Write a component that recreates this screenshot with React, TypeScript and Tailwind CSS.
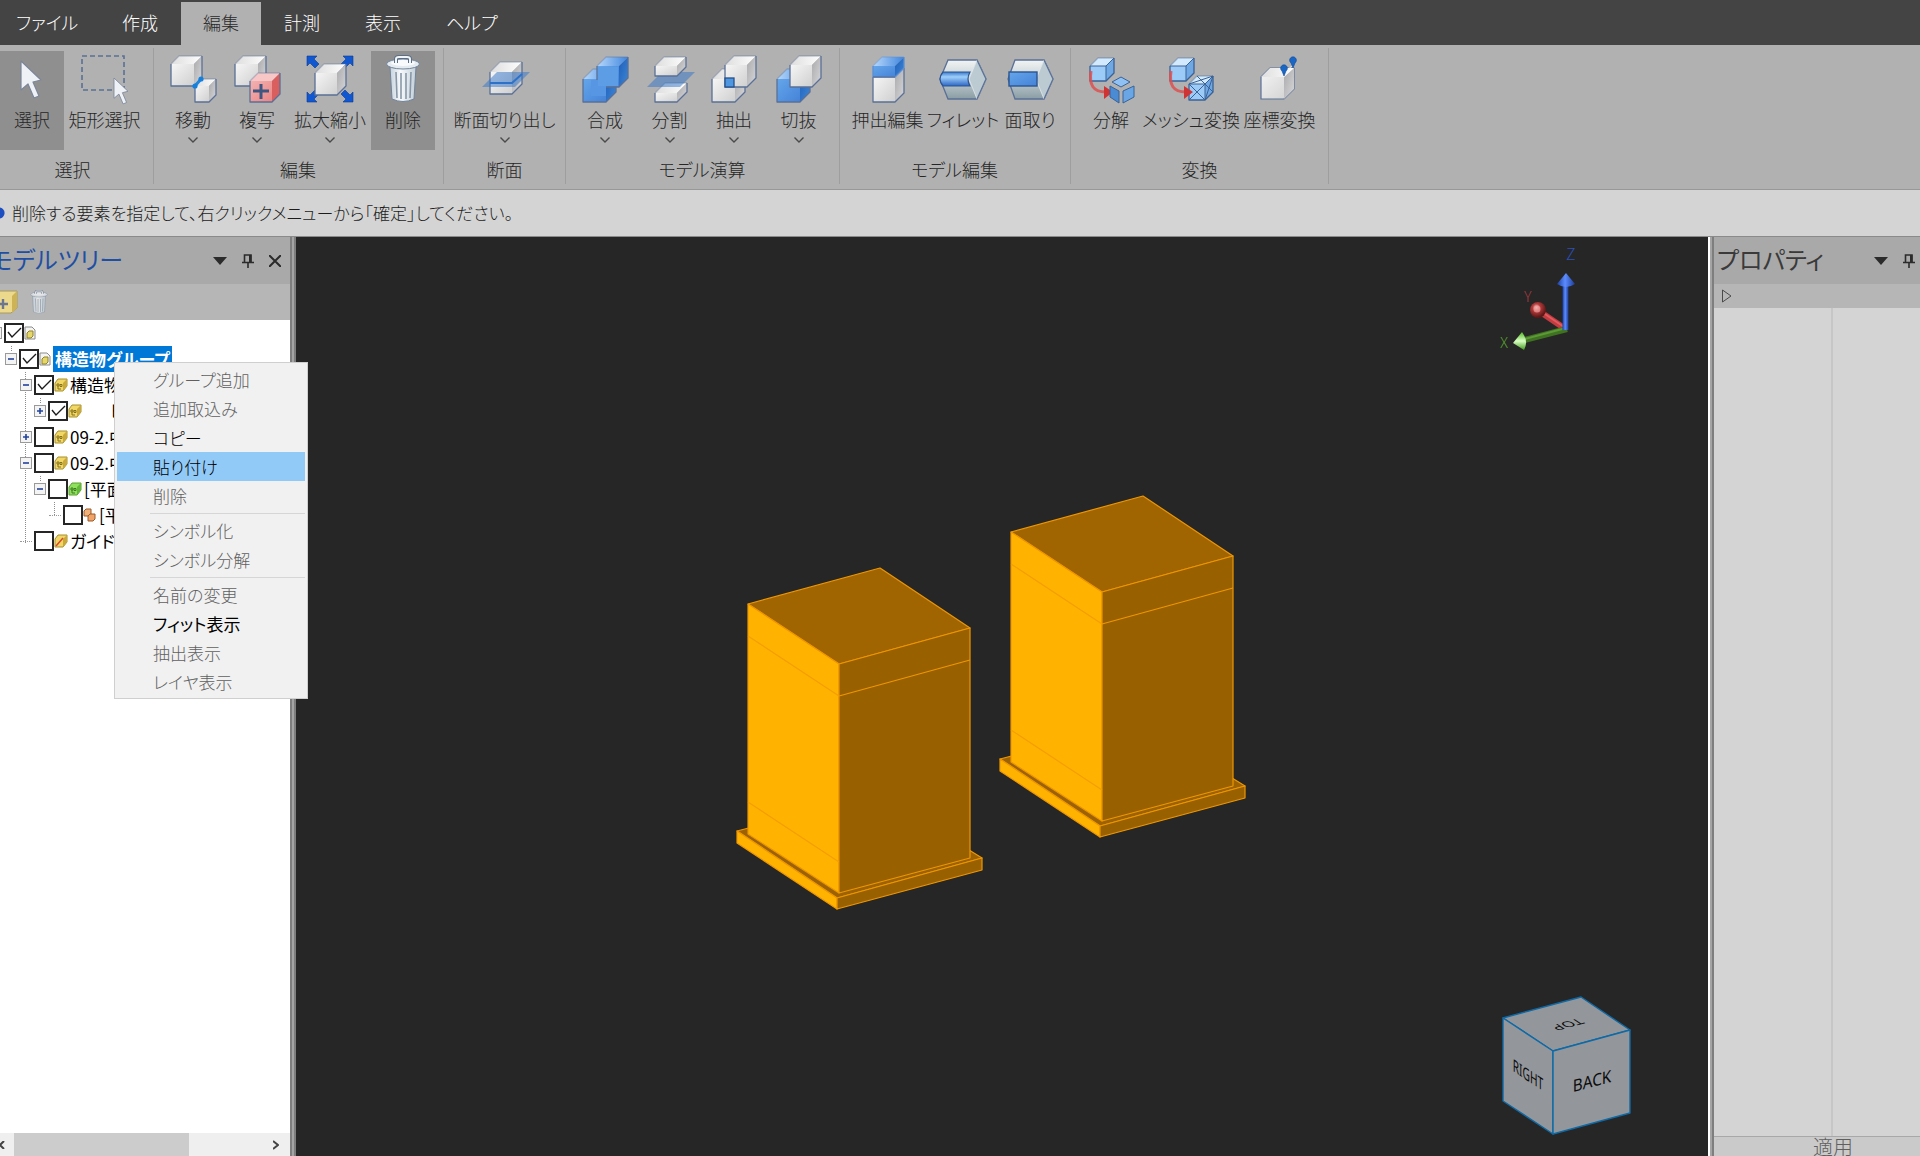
import type { ReactNode } from "react";
import clsx from "clsx";

/* ---------- shared drawing pieces ---------- */

const LINE = "#5a7096";

function Gradients() {
  return (
    <svg className="absolute h-0 w-0" aria-hidden="true">
      <defs>
        <linearGradient id="white" x1="0" y1="0" x2="1" y2="1">
          <stop offset="0" stopColor="#f6f6f6" />
          <stop offset="1" stopColor="#cfcfcf" />
        </linearGradient>
        <linearGradient id="whiteSide" x1="0" y1="0" x2="1" y2="1">
          <stop offset="0" stopColor="#a9a9ac" />
          <stop offset="1" stopColor="#d8d8da" />
        </linearGradient>
        <linearGradient id="whiteTop" x1="0" y1="0" x2="1" y2="0">
          <stop offset="0" stopColor="#dedede" />
          <stop offset="1" stopColor="#fdfdfd" />
        </linearGradient>
        <linearGradient id="blue" x1="0" y1="0" x2="1" y2="1">
          <stop offset="0" stopColor="#64a6ea" />
          <stop offset="1" stopColor="#4582d8" />
        </linearGradient>
        <linearGradient id="blueSide" x1="0" y1="0" x2="1" y2="1">
          <stop offset="0" stopColor="#1f5fb8" />
          <stop offset="1" stopColor="#3d86d6" />
        </linearGradient>
        <linearGradient id="blueTop" x1="0" y1="0" x2="1" y2="0">
          <stop offset="0" stopColor="#b8d8fa" />
          <stop offset="1" stopColor="#3f86df" />
        </linearGradient>
        <linearGradient id="red" x1="0" y1="0" x2="1" y2="1">
          <stop offset="0" stopColor="#f3b2b2" />
          <stop offset="1" stopColor="#ec8484" />
        </linearGradient>
        <linearGradient id="steel" x1="0" y1="0" x2="0" y2="1">
          <stop offset="0" stopColor="#f2f4f4" />
          <stop offset="0.45" stopColor="#c8d2d6" />
          <stop offset="1" stopColor="#8a9da4" />
        </linearGradient>
        <linearGradient id="can" x1="0" y1="0" x2="1" y2="0">
          <stop offset="0" stopColor="#c6d2dc" />
          <stop offset="0.4" stopColor="#f7fafc" />
          <stop offset="1" stopColor="#c2ced8" />
        </linearGradient>
        <linearGradient id="roll" x1="0" y1="0" x2="0" y2="1">
          <stop offset="0" stopColor="#3a78cc" />
          <stop offset="0.35" stopColor="#9fd0fb" />
          <stop offset="1" stopColor="#2c66c4" />
        </linearGradient>
        <linearGradient id="zAxis" x1="0" y1="0" x2="1" y2="0">
          <stop offset="0" stopColor="#1c3f9e" />
          <stop offset="0.45" stopColor="#5c8cff" />
          <stop offset="1" stopColor="#1b3c96" />
        </linearGradient>
        <linearGradient id="xAxis" x1="0" y1="0" x2="0" y2="1">
          <stop offset="0" stopColor="#4fb81f" />
          <stop offset="0.5" stopColor="#d9ffc4" />
          <stop offset="1" stopColor="#3f9a18" />
        </linearGradient>
        <radialGradient id="yAxis" cx="0.4" cy="0.35" r="0.6">
          <stop offset="0" stopColor="#ffd0d0" />
          <stop offset="0.4" stopColor="#b63c3c" />
          <stop offset="1" stopColor="#5e1717" />
        </radialGradient>
      </defs>
    </svg>
  );
}

type CubeProps = {
  x: number;
  y: number;
  w: number;
  h: number;
  d: number;
  front?: string;
  top?: string;
  side?: string;
  line?: string;
};

/** Box with its front face at (x, y) and a depth of d towards the upper right. */
function Cube({
  x, y, w, h, d,
  front = "url(#white)", top = "url(#whiteTop)", side = "url(#whiteSide)", line = LINE,
}: CubeProps) {
  return (
    <g strokeLinejoin="round" strokeWidth="1.3">
      <rect x={x} y={y} width={w} height={h} fill={front} />
      <path d={`M${x} ${y}l${d} ${-d}h${w}l${-d} ${d}z`} fill={top} />
      <path d={`M${x + w} ${y}l${d} ${-d}v${h}l${-d} ${d}z`} fill={side} />
      <path d={`M${x} ${y}l${d} ${-d}h${w}`} fill="none" stroke={line} opacity="0.35" />
      <path d={`M${x + w + d} ${y - d}v${h}l${-d} ${d}h${-w}v${-h}`} fill="none" stroke={line} />
    </g>
  );
}

const blueFaces = { front: "url(#blue)", top: "url(#blueTop)", side: "url(#blueSide)" };
const paleFaces = { front: "#9ccbf8", top: "#d3e9fd", side: "#6fa8e2", line: "#3a6296" };

function Pointer({ x, y, s }: { x: number; y: number; s: number }) {
  return (
    <path
      transform={`translate(${x} ${y}) scale(${s})`}
      d="M0 0V29L7 23L13 37L18 35L12 21L20 19Z"
      fill="#eef1f6" stroke="#7c8698" strokeWidth="1.2" strokeLinejoin="round"
    />
  );
}

function Can() {
  return (
    <>
      <path d="M11 12L13 44Q24 49 35 44L37 12Z" fill="url(#can)" stroke="#71839a" />
      <path d="M17 17L18 43M22 18V44M27 18V44M32 17L31 43" stroke="#8797a8" strokeWidth="1.6" fill="none" />
      <ellipse cx="24" cy="9" rx="16.5" ry="5" fill="#e3eaf0" stroke="#71839a" />
      <ellipse cx="24" cy="8" rx="12" ry="3" fill="#f8fafc" />
      <path d="M17 8V4Q17 2 20 2H28Q31 2 31 4V8" fill="none" stroke="#5c6f86" strokeWidth="4" />
      <path d="M17 8V4Q17 2 20 2H28Q31 2 31 4V8" fill="none" stroke="#f2f5f8" strokeWidth="2" />
    </>
  );
}

function Plane() {
  return <path d="M1 32H34L49 17H16Z" fill="#2f74c8" opacity="0.5" />;
}

function CornerArrow({ r }: { r: number }) {
  return (
    <path
      transform={`rotate(${r} 24 24)`}
      d="M1 1H11L8 4L13 9L9 13L4 8L1 11Z"
      fill="#1158d0" stroke="#0a3a94" strokeWidth="0.6"
    />
  );
}

function RedArrow() {
  return (
    <>
      <path d="M4 16C2 30 6 37 19 37" fill="none" stroke="#dd5050" strokeWidth="3" opacity="0.85" />
      <path d="M17 31L26 37L17 44Z" fill="#cf3434" />
    </>
  );
}

function Hexagon({ left }: { left: number }) {
  return (
    <>
      <path d={`M${left} 24L9 5H38L47 24L38 44H9Z`} fill="url(#steel)" stroke={LINE} strokeWidth="1.3" />
      <path d="M30 24L38 5L47 24L38 44Z" fill="#bccbd2" stroke="#e2e9ec" strokeWidth="0.8" />
      <path d="M38 5L47 24L38 44" fill="none" stroke={LINE} strokeWidth="1.3" />
    </>
  );
}

function Pin({ x, y }: { x: number; y: number }) {
  return (
    <path
      transform={`translate(${x} ${y})`}
      d="M0 8L-2 3A3.4 3.4 0 1 1 2 3Z"
      fill="#1a66c4" stroke="#0d4a9c" strokeWidth="0.6"
    />
  );
}

const icons: Record<string, ReactNode> = {
  select: <Pointer x={13} y={6} s={1} />,
  rectSelect: (
    <>
      <rect x="1" y="1" width="42" height="34" fill="none" stroke={LINE} strokeWidth="1.6" strokeDasharray="5 3" />
      <Pointer x={33} y={23} s={0.7} />
    </>
  ),
  move: (
    <>
      <Cube x={2} y={9} w={23} h={22} d={8} />
      <Cube x={26} y={31} w={14} h={16} d={7} />
      <path d="M26 31L32 24" stroke="#1f86dc" strokeWidth="3" />
      <circle cx="26" cy="31" r="2.6" fill="#1580dc" />
      <circle cx="32" cy="24" r="2.6" fill="#1580dc" />
    </>
  ),
  copy: (
    <>
      <Cube x={2} y={9} w={23} h={22} d={8} />
      <Cube x={17} y={26} w={22} h={21} d={8} front="url(#red)" top="#f7c6c6" side="#d95f5f" />
      <path d="M28 29V44M20 36H36" stroke="#3f5680" strokeWidth="3" />
    </>
  ),
  scale: (
    <>
      <CornerArrow r={0} />
      <CornerArrow r={90} />
      <CornerArrow r={180} />
      <CornerArrow r={270} />
      <Cube x={9} y={18} w={22} h={22} d={9} />
    </>
  ),
  trash: <Can />,
  section: (
    <>
      <Cube x={9} y={17} w={22} h={22} d={10} />
      <Plane />
      <path d="M9 28H31L41 19" fill="none" stroke="#2d72c8" strokeWidth="2" />
    </>
  ),
  union: (
    <>
      <Cube x={2} y={24} w={23} h={23} d={10} {...blueFaces} />
      <Cube x={16} y={11} w={22} h={21} d={9} {...blueFaces} />
      <rect x="10" y="25" width="15" height="16" fill="#5796e3" />
      <path d="M17 12H37V31H17Z" fill="#5c9de6" />
    </>
  ),
  split: (
    <>
      <Cube x={9} y={38} w={22} h={9} d={10} />
      <Plane />
      <Cube x={9} y={11} w={22} h={10} d={9} />
    </>
  ),
  intersect: (
    <>
      <Cube x={2} y={24} w={23} h={23} d={10} />
      <Cube x={15} y={10} w={22} h={22} d={9} />
      <rect x="15" y="23" width="9" height="9" fill="#4f97e0" stroke="#27508c" strokeWidth="1.3" />
    </>
  ),
  subtract: (
    <>
      <Cube x={2} y={24} w={23} h={23} d={10} {...blueFaces} />
      <Cube x={15} y={10} w={22} h={22} d={9} />
    </>
  ),
  extrude: (
    <>
      <Cube x={9} y={22} w={22} h={25} d={9} />
      <Cube x={9} y={11} w={22} h={11} d={9} {...blueFaces} line="#5b8fd4" />
      <path d="M9 22H31" stroke={LINE} strokeWidth="1.3" />
    </>
  ),
  fillet: (
    <>
      <Hexagon left={1} />
      <path d="M4 17H31Q27 24 31 31H4Q-2 24 4 17Z" fill="url(#roll)" stroke="#2d5590" strokeWidth="1.2" />
    </>
  ),
  chamfer: (
    <>
      <Hexagon left={2} />
      <rect x="3" y="17" width="28" height="14" fill="url(#blue)" stroke="#2d5590" strokeWidth="1.4" />
    </>
  ),
  explode: (
    <>
      <Cube x={3} y={11} w={16} h={15} d={8} {...paleFaces} />
      <path d="M3 11H19V26M19 11L27 3" fill="none" stroke="#3a6296" />
      <RedArrow />
      <path d="M25 27L34 22L43 27L34 32Z" fill="#8fc1f4" stroke="#3a6296" />
      <path d="M23 31L32 36V48L23 42Z" fill="#4b8bd4" stroke="#3a6296" />
      <path d="M36 36L47 31V42L36 48Z" fill="#6aa6e6" stroke="#3a6296" />
    </>
  ),
  mesh: (
    <>
      <Cube x={3} y={11} w={16} h={15} d={8} {...paleFaces} />
      <path d="M3 11H19V26M19 11L27 3" fill="none" stroke="#3a6296" />
      <Cube x={22} y={29} w={16} h={16} d={8} {...paleFaces} />
      <path d="M22 29H38V45M38 29L46 21M22 29L38 45M22 45L38 29M30 21L38 29L46 37M22 29L46 21M38 45L46 21" fill="none" stroke="#3a6296" />
      <RedArrow />
    </>
  ),
  coords: (
    <>
      <path d="M5 22L14 13H28L38 13V34L28 44H5Z" fill="url(#white)" stroke={LINE} strokeWidth="1.2" />
      <path d="M28 22L38 13V34L28 44Z" fill="url(#whiteSide)" />
      <path d="M5 22L14 13H38L28 22Z" fill="url(#whiteTop)" />
      <path d="M28 18L38 9" stroke="#f2f2f2" />
      <Pin x={28} y={13} />
      <Pin x={37} y={5} />
    </>
  ),
};

/* ---------- top bars ---------- */

const tabs = ["作成", "編集", "計測", "表示", "ヘルプ"];

function MenuBar() {
  return (
    <nav className="flex h-[45px] shrink-0 gap-px bg-[#444444] pt-0.5 text-lg leading-6 text-white">
      <button className="w-[99px] pb-1 pl-4 text-left">ファイル</button>
      {tabs.map((t) => (
        <button
          key={t}
          className={clsx("h-[43px] px-[22px] pb-1", t === "編集" ? "bg-[#b1b1b1] text-[#2a2a2a]" : "text-white")}
        >
          {t}
        </button>
      ))}
    </nav>
  );
}

type Tool = { icon: string; label: string; width: string; more?: boolean; on?: boolean };
const N = "w-16";
const M = "w-[81px]";

const groups: { title: string; pad: string; tools: Tool[] }[] = [
  {
    title: "選択", pad: "pr-2",
    tools: [
      { icon: "select", label: "選択", width: N, on: true },
      { icon: "rectSelect", label: "矩形選択", width: M },
    ],
  },
  {
    title: "編集", pad: "pl-[7px] pr-2",
    tools: [
      { icon: "move", label: "移動", width: N, more: true },
      { icon: "copy", label: "複写", width: N, more: true },
      { icon: "scale", label: "拡大縮小", width: "w-[82px]", more: true },
      { icon: "trash", label: "削除", width: N, on: true },
    ],
  },
  {
    title: "断面", pad: "px-2",
    tools: [{ icon: "section", label: "断面切り出し", width: "w-[105px]", more: true }],
  },
  {
    title: "モデル演算", pad: "pl-[7px] pr-2",
    tools: [
      { icon: "union", label: "合成", width: N, more: true },
      { icon: "split", label: "分割", width: "w-[65px]", more: true },
      { icon: "intersect", label: "抽出", width: N, more: true },
      { icon: "subtract", label: "切抜", width: "w-[65px]", more: true },
    ],
  },
  {
    title: "モデル編集", pad: "pl-[7px] pr-2",
    tools: [
      { icon: "extrude", label: "押出編集", width: M },
      { icon: "fillet", label: "フィレット", width: "w-[70px]" },
      { icon: "chamfer", label: "面取り", width: N },
    ],
  },
  {
    title: "変換", pad: "px-2",
    tools: [
      { icon: "explode", label: "分解", width: N },
      { icon: "mesh", label: "メッシュ変換", width: "w-24" },
      { icon: "coords", label: "座標変換", width: M },
    ],
  },
];

function Ribbon() {
  return (
    <div className="flex h-[145px] shrink-0 border-b border-[#989898] bg-[#b1b1b1] pt-[3px] text-lg leading-6 text-[#262626]">
      {groups.map((g) => (
        <section key={g.title} className={clsx("flex h-[136px] flex-col border-r border-[#9e9e9e] pt-[3px]", g.pad)}>
          <div className="flex">
            {g.tools.map((t) => (
              <button
                key={t.label}
                className={clsx("flex h-[99px] flex-col items-center pt-1 whitespace-nowrap", t.width, t.on && "bg-[#8f8f8f]")}
              >
                <svg viewBox="0 0 48 48" className="size-12 shrink-0 overflow-visible">{icons[t.icon]}</svg>
                <span className="mt-1">{t.label}</span>
                {t.more && (
                  <svg viewBox="0 0 10 6" className="mt-1.5 h-1.5 w-2.5" fill="none" stroke="#4a4a4a" strokeWidth="1.4">
                    <path d="M0.5 0.5L5 5L9.500 0.5" />
                  </svg>
                )}
              </button>
            ))}
          </div>
          <h2 className="mt-[7px] text-center">{g.title}</h2>
        </section>
      ))}
    </div>
  );
}

function StatusBar() {
  return (
    <div className="flex h-[47px] shrink-0 items-center border-b border-[#8a8a8a] bg-[#d4d4d4] text-[17px] text-[#1c1c1c]">
      <svg viewBox="0 0 5 12" className="h-3 w-[5px]"><circle cx="-1" cy="6" r="5.6" fill="#1d4fc0" /></svg>
      <p className="pl-[7px]">削除する要素を指定して、右クリックメニューから「確定」してください。</p>
    </div>
  );
}

/* ---------- dock panel header ---------- */

function Triangle() {
  return (
    <button aria-label="メニュー">
      <svg viewBox="0 0 14 8" className="h-2 w-3.5"><path d="M0 0H14L7 8Z" fill="#2b2b2b" /></svg>
    </button>
  );
}

function PinButton() {
  return (
    <button aria-label="固定">
      <svg viewBox="0 0 12 14" className="h-3.5 w-3" fill="none" stroke="#2b2b2b" strokeWidth="1.6">
        <path d="M2.5 8V1H9V8M0 8.500H12M6 9V14" />
        <path d="M8.200 1V8" strokeWidth="2.4" />
      </svg>
    </button>
  );
}

/* ---------- model tree ---------- */

function TreeIcon({ kind }: { kind: string }) {
  if (kind === "page")
    return (
      <svg viewBox="0 0 14 14" className="size-3.5 shrink-0">
        <path d="M1 1H8L11 4V13H1Z" fill="#f4f4f4" stroke="#8b8b8b" />
        <path d="M3 7L5 5H9V10L7 12H3Z" fill="#e6d76a" stroke="#8f8126" />
      </svg>
    );
  if (kind === "pair")
    return (
      <svg viewBox="0 0 14 14" className="size-3.5 shrink-0" stroke="#9a5a2a">
        <path d="M1 3L3 1H8V6L6 8H1Z" fill="#f0b07a" />
        <path d="M5 8L7 6H12V11L10 13H5Z" fill="#f0a468" />
      </svg>
    );
  const green = kind === "green";
  return (
    <svg viewBox="0 0 14 14" className="size-3.5 shrink-0">
      <path d="M1 5L4 1H13V8L9 13H1Z" fill={green ? "#8fe05c" : "#f0d766"} stroke={green ? "#5aa02f" : "#a88f2c"} />
      <path d="M9 5L13 1V8L9 13Z" fill={green ? "#62b838" : "#c9a93a"} />
      {kind === "guide" ? (
        <path d="M2 12L9 4" stroke="#d8482e" strokeWidth="1.5" />
      ) : (
        <path d="M3 6H5V8H3ZM4 8V11H7M6 6.500H8V8.500H6Z" fill="none" stroke={green ? "#3d7a20" : "#85701c"} />
      )}
    </svg>
  );
}

type Row = { indent: string; exp?: "+" | "-"; checked: boolean; icon: string; label: string; bold?: boolean; gap?: string };

const rows: Row[] = [
  { indent: "w-0", exp: "-", checked: true, icon: "page", label: "" },
  { indent: "w-[15px]", exp: "-", checked: true, icon: "page", label: "構造物グループ", bold: true },
  { indent: "w-[30px]", exp: "-", checked: true, icon: "box", label: "構造物" },
  { indent: "w-11", exp: "+", checked: true, icon: "box", label: "ヒ", gap: "ml-[26px]" },
  { indent: "w-[30px]", exp: "+", checked: false, icon: "box", label: "09-2.中" },
  { indent: "w-[30px]", exp: "-", checked: false, icon: "box", label: "09-2.中" },
  { indent: "w-11", exp: "-", checked: false, icon: "green", label: "[平面]" },
  { indent: "w-[59px]", checked: false, icon: "pair", label: "[平面]" },
  { indent: "w-[30px]", checked: false, icon: "guide", label: "ガイド" },
];

function TreeRow({ row, n }: { row: Row; n: number }) {
  return (
    <li className="flex h-[26px] items-center whitespace-nowrap text-black">
      <span className={clsx("shrink-0", row.indent)} />
      {row.exp ? (
        <button aria-label="展開" className="grid size-3 shrink-0 place-items-center border border-[#9a9a9a] bg-[#f4f4f4]">
          <svg viewBox="0 0 8 8" className="size-2" stroke="#22429c" strokeWidth="1.6">
            <path d={row.exp === "+" ? "M1 4H7M4 1V7" : "M1 4H7"} />
          </svg>
        </button>
      ) : (
        <span className="w-3 shrink-0 border-b border-dotted border-[#9a9a9a]" />
      )}
      <label className="ml-0.5 flex items-center">
        <span className="relative size-5 shrink-0">
          <input
            type="checkbox"
            defaultChecked={row.checked}
            aria-label={row.label || `項目${n}`}
            className="peer block size-5 appearance-none border-2 border-[#262626] bg-white"
          />
          <svg viewBox="0 0 20 20" className="pointer-events-none absolute inset-0 hidden size-5 peer-checked:block" fill="none" stroke="#1c1c1c" strokeWidth="1.4">
            <path d="M4 9L8 14L17 5" />
          </svg>
        </span>
        <TreeIcon kind={row.icon} />
        {row.label && (
          <span className={clsx("px-0.5 leading-[26px]", row.bold && "bg-[#0078d7] font-bold text-white", row.gap)}>
            {row.label}
          </span>
        )}
      </label>
    </li>
  );
}

function TreePanel() {
  return (
    <aside className="flex w-[290px] shrink-0 flex-col bg-[#b4b4b4]">
      <header className="flex h-[47px] shrink-0 items-center bg-[#a9a9a9] pr-[9px]">
        <h2 className="-ml-2.5 flex-1 pb-1 text-2xl whitespace-nowrap text-[#1f4fa3] font-normal">モデルツリー</h2>
        <div className="flex items-center gap-[15px]">
          <Triangle />
          <PinButton />
          <button aria-label="閉じる">
            <svg viewBox="0 0 12 12" className="size-3" stroke="#2b2b2b" strokeWidth="2"><path d="M0 0L12 12M12 0L0 12" /></svg>
          </button>
        </div>
      </header>
      <div className="flex h-9 shrink-0 items-center gap-3 bg-[#b6b6b6]">
        <button aria-label="追加">
          <svg viewBox="0 0 18 24" className="h-6 w-[18px]">
            <path d="M-4 5L0 1H17V18L11 23H-4Z" fill="#ecd98c" stroke="#a89a5c" />
            <path d="M12 6L17 1V18L12 23Z" fill="#cdb355" />
            <path d="M3 9V19M-2 14H8" stroke="#6b7690" strokeWidth="2.4" />
          </svg>
        </button>
        <button aria-label="削除" className="opacity-70">
          <svg viewBox="6 0 36 48" className="h-6 w-[18px]"><Can /></svg>
        </button>
      </div>
      <div className="relative flex min-h-0 flex-1 flex-col overflow-hidden bg-white">
        <svg className="absolute inset-0 size-full" fill="none" stroke="#8c8c8c" strokeDasharray="1 1">
          <path d="M11.500 26V32M25.500 52V223M40.500 78V84M40.500 156V162M54.500 182V196" />
        </svg>
        <ul className="relative -ml-2.5 text-[17px] font-normal">
          {rows.map((r, i) => <TreeRow key={i} row={r} n={i + 1} />)}
        </ul>
      </div>
      <div className="flex h-[23px] shrink-0 items-center bg-[#efefef]">
        <button aria-label="左へ" className="w-3.5">
          <svg viewBox="0 0 5 8" className="h-2 w-[5px]" fill="none" stroke="#444" strokeWidth="2"><path d="M4 0L0 4L4 8" /></svg>
        </button>
        <div className="h-full w-[175px] bg-[#cccccc]" />
        <button aria-label="右へ" className="ml-auto pr-[11px]">
          <svg viewBox="0 0 6 10" className="h-2.5 w-1.5" fill="none" stroke="#444" strokeWidth="2"><path d="M0 1L5 5L0 9" /></svg>
        </button>
      </div>
    </aside>
  );
}

/* ---------- 3D view ---------- */

function Block() {
  return (
    <g stroke="#ee9600" strokeWidth="1.2" strokeLinejoin="round">
      <path d="M737 831L880 795L982 858L837 898Z" fill="#9c6200" />
      <path d="M737 831V843L837 909V898Z" fill="#ffb300" />
      <path d="M837 898L982 858V870L837 909Z" fill="#996000" />
      <path d="M748 604L880 568L970 628L839 664Z" fill="#a06400" />
      <path d="M748 604L839 664V893L748 834Z" fill="#ffb300" />
      <path d="M839 664L970 628V858L839 893Z" fill="#996000" />
      <path d="M839 696L970 660" />
      <path d="M748 636L839 696M748 802L839 862" stroke="#f59e00" />
    </g>
  );
}

function Viewport() {
  return (
    <main className="relative grid min-w-0 flex-1 place-items-center overflow-hidden bg-[#262626]">
      <svg viewBox="732 477 540 440" className="h-[440px] w-[540px]">
        <g transform="translate(263 -72)"><Block /></g>
        <Block />
      </svg>

      <svg viewBox="1494 240 88 112" className="absolute top-0.5 right-[127px] h-28 w-[88px]">
        <path d="M1540 312L1565 329" stroke="#c23c40" strokeWidth="6" />
        <path d="M1540 311L1565 328" stroke="#e05a5e" strokeWidth="2" />
        <ellipse cx="1539" cy="311" rx="8" ry="8" fill="url(#yAxis)" />
        <circle cx="1538" cy="310" r="3.5" fill="#f0a0a0" opacity="0.7" />
        <path d="M1522 342L1568 330" stroke="#3f7322" strokeWidth="6" />
        <path d="M1522 341L1567 329" stroke="#5c9a35" strokeWidth="2" />
        <path d="M1514 344L1523 333Q1530 342 1525 351Z" fill="url(#xAxis)" />
        <rect x="1563.500" y="286" width="6" height="45" fill="url(#zAxis)" />
        <path d="M1567 274L1576 285Q1567 291 1558 285Z" fill="url(#zAxis)" />
        <text x="1567" y="261" fill="#2c51b8" fontSize="16">Z</text>
        <text x="1525" y="303" fill="#a83a3e" fontSize="15">Y</text>
        <text x="1501" y="349" fill="#57a030" fontSize="15">X</text>
      </svg>

      <svg viewBox="1498 990 140 150" className="absolute right-[70px] bottom-4 h-[150px] w-[140px] font-normal">
        <g fill="#93969b" stroke="#0e6aa6" strokeWidth="1.4" strokeLinejoin="round">
          <path d="M1503 1018L1581 997L1630 1030L1553 1051Z" />
          <path d="M1503 1018L1553 1051V1134L1503 1101Z" />
          <path d="M1553 1051L1630 1030V1113L1553 1134Z" />
        </g>
        <g fill="#0c0c0c" fontSize="17" textAnchor="middle" fontFamily="Noto Sans, sans-serif">
          <text transform="matrix(0.9 -0.24 0 1 1592 1087)">BACK</text>
          <text transform="matrix(0.6 0.4 0 1 1528 1081)">RIGHT</text>
          <text transform="matrix(-0.85 0.23 -0.6 -0.4 1564 1022)">TOP</text>
        </g>
      </svg>
    </main>
  );
}

/* ---------- property panel ---------- */

function PropertyPanel() {
  return (
    <aside className="flex w-[206px] shrink-0 flex-col bg-[#d4d4d4]">
      <header className="flex h-[47px] shrink-0 items-center bg-[#a9a9a9] pr-[5px] pl-[3px]">
        <h2 className="flex-1 pb-1 text-2xl whitespace-nowrap text-[#3a3a3a] font-normal">プロパティ</h2>
        <div className="flex items-center gap-[15px]">
          <Triangle />
          <PinButton />
        </div>
      </header>
      <div className="flex h-6 shrink-0 items-center bg-[#b6b6b6] pl-2">
        <button aria-label="開く">
          <svg viewBox="0 0 10 14" className="h-3.5 w-2.5" fill="none" stroke="#4a4a4a"><path d="M0.500 1V13L9 7Z" /></svg>
        </button>
      </div>
      <div className="flex min-h-0 flex-1">
        <div className="w-[119px] border-r-2 border-[#c6c6c6]" />
        <div className="flex-1" />
      </div>
      <button className="h-5 shrink-0 border-t border-[#a8a8a8] bg-[#cacaca] pl-8 text-xl leading-5 text-[#5f5f5f]">
        適用
      </button>
    </aside>
  );
}

/* ---------- context menu ---------- */

const menu: { label: string; state?: "on" | "active" | "strong" }[][] = [
  [
    { label: "グループ追加" },
    { label: "追加取込み" },
    { label: "コピー", state: "on" },
    { label: "貼り付け", state: "active" },
    { label: "削除" },
  ],
  [{ label: "シンボル化" }, { label: "シンボル分解" }],
  [
    { label: "名前の変更" },
    { label: "フィット表示", state: "strong" },
    { label: "抽出表示" },
    { label: "レイヤ表示" },
  ],
];

function ContextMenu() {
  return (
    <div className="absolute top-[362px] left-[114px] w-[194px] border border-[#cfcfcf] bg-[#f1f1f1] p-0.5 text-[17px] leading-[29px]">
      {menu.map((section, i) => (
        <div key={i}>
          {i > 0 && <hr className="mt-[3px] mb-0.5 ml-[33px] border-t border-[#d6d6d6]" />}
          {section.map(({ label, state }) => (
            <button
              key={label}
              className={clsx(
                "block h-[29px] w-full pl-9 text-left whitespace-nowrap",
                state ? "text-black" : "text-[#606060]",
                state === "active" && "bg-[#91c9f7]",
                state === "strong" && "font-normal",
              )}
            >
              {label}
            </button>
          ))}
        </div>
      ))}
    </div>
  );
}

export default function App() {
  return (
    <div className="relative flex h-screen flex-col overflow-hidden bg-[#d4d4d4] font-['Noto_Sans_CJK_JP',sans-serif] font-light [font-feature-settings:'palt']">
      <Gradients />
      <MenuBar />
      <Ribbon />
      <StatusBar />
      <div className="flex min-h-0 flex-1">
        <TreePanel />
        <div className="w-1.5 shrink-0 border-x-2 border-[#7e7e7e] bg-[#a4a4a4]" />
        <Viewport />
        <div className="w-0.5 shrink-0 bg-white" />
        <div className="w-1 shrink-0 border-r-2 border-[#7e7e7e] bg-[#a4a4a4]" />
        <PropertyPanel />
      </div>
      <ContextMenu />
    </div>
  );
}
